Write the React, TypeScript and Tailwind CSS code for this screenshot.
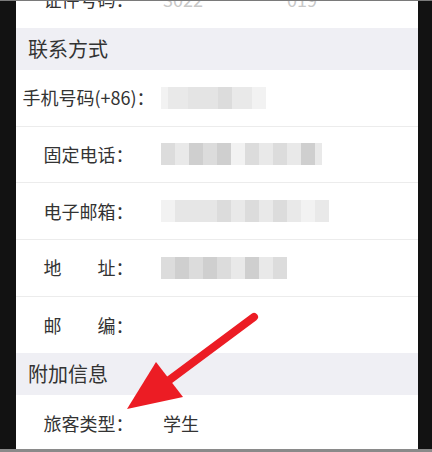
import React from "react";

const font = { fontFamily: '"Noto Sans CJK SC", "Noto Sans", sans-serif' };

function Blocks({ cells }: { cells: { w: number; c: string }[] }) {
  return (
    <div className="flex h-[22px]">
      {cells.map((b, i) => (
        <div key={i} style={{ width: b.w, background: b.c }} className="h-full" />
      ))}
    </div>
  );
}

function Row({
  label,
  children,
  border = true,
  extra = "",
}: {
  label: React.ReactNode;
  children?: React.ReactNode;
  border?: boolean;
  extra?: string;
}) {
  return (
    <div
      className={`flex h-[57px] items-center bg-white ${border ? "border-b border-[#ececec]" : ""} ${extra}`}
    >
      <div className="w-[145px] shrink-0 text-center text-[18px] text-[#333]">{label}</div>
      <div className="flex-1">{children}</div>
    </div>
  );
}

function Header({ title }: { title: string }) {
  return (
    <div className="flex h-[42px] items-center bg-[#efeff4] pl-[12px] text-[20px] text-[#333]">
      {title}
    </div>
  );
}

export default function App() {
  const g1 = "#e9e9e9";
  const g2 = "#dcdcdc";
  const g3 = "#f2f2f2";
  const g4 = "#cfcfcf";
  return (
    <div className="relative h-[452px] w-[432px] overflow-hidden bg-[#121212]" style={font}>
      <div className="absolute left-0 right-0 top-0 h-[1px] bg-[#7a7a7a]" />
      <div className="ml-[16px] flex h-full w-[402px] flex-col overflow-hidden bg-white">
        <div className="-mt-[29px] flex h-[57px] shrink-0 items-center bg-white">
          <div className="w-[145px] shrink-0 text-center text-[18px] text-[#333]">证件号码：</div>
          <div className="flex flex-1 gap-[84px] text-[18px] text-[#c8c8c8]">
            <span className="ml-[2px]">3022</span>
            <span>019</span>
          </div>
        </div>
        <Header title="联系方式" />
        <Row label="手机号码(+86)：">
          <Blocks
            cells={[
              { w: 7, c: g3 },
              { w: 20, c: g1 },
              { w: 30, c: "#e4e4e4" },
              { w: 14, c: g2 },
              { w: 20, c: g1 },
              { w: 14, c: g3 },
            ]}
          />
        </Row>
        <Row label="固定电话：">
          <Blocks
            cells={[
              { w: 14, c: g2 },
              { w: 14, c: g1 },
              { w: 14, c: g4 },
              { w: 14, c: g2 },
              { w: 14, c: g4 },
              { w: 14, c: g3 },
              { w: 14, c: g2 },
              { w: 14, c: g1 },
              { w: 14, c: g2 },
              { w: 14, c: g1 },
              { w: 14, c: g4 },
              { w: 7, c: g1 },
            ]}
          />
        </Row>
        <Row label="电子邮箱：">
          <Blocks
            cells={[
              { w: 14, c: g3 },
              { w: 42, c: "#e6e6e6" },
              { w: 14, c: g2 },
              { w: 14, c: g1 },
              { w: 14, c: g2 },
              { w: 14, c: g1 },
              { w: 14, c: g2 },
              { w: 14, c: g1 },
              { w: 14, c: g3 },
              { w: 14, c: g1 },
            ]}
          />
        </Row>
        <Row label={<span>地&emsp;&emsp;址：</span>}>
          <Blocks
            cells={[
              { w: 14, c: g2 },
              { w: 14, c: g4 },
              { w: 14, c: g2 },
              { w: 14, c: g4 },
              { w: 14, c: g2 },
              { w: 14, c: g1 },
              { w: 14, c: g4 },
              { w: 14, c: g1 },
              { w: 14, c: g2 },
            ]}
          />
        </Row>
        <Row label={<span>邮&emsp;&emsp;编：</span>} border={false} extra="h-[56px]" />
        <Header title="附加信息" />
        <Row label="旅客类型：" border={false}>
          <span className="ml-[2px] text-[18px] text-[#333]">学生</span>
        </Row>
      </div>
      <div className="absolute bottom-0 left-0 right-0 h-[3px] bg-[#8a8a8a]" />
      <svg className="absolute left-0 top-0" width="432" height="452" viewBox="0 0 432 452">
        <line x1="254" y1="317" x2="168" y2="381" stroke="#ec1c24" strokeWidth="8" strokeLinecap="round" />
        <polygon points="127,409 156,362 183,397" fill="#ec1c24" />
      </svg>
    </div>
  );
}
